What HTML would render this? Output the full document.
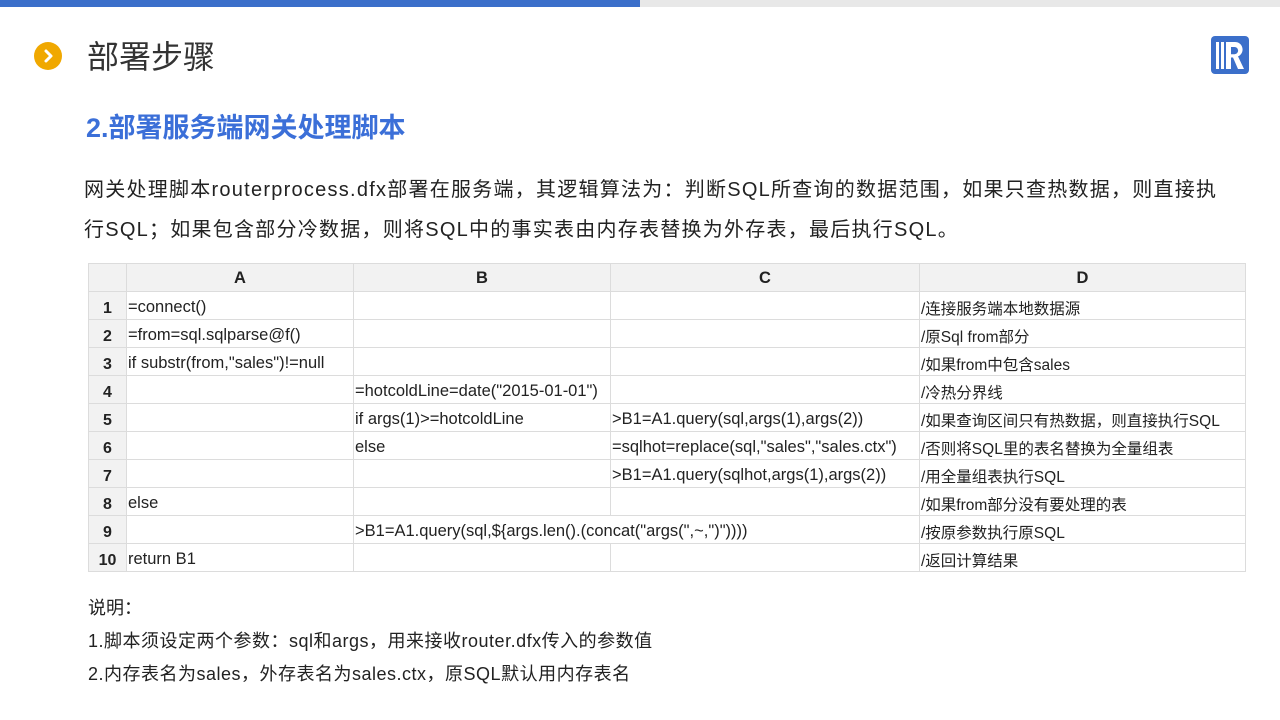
<!DOCTYPE html>
<html><head><meta charset="utf-8"><style>
*{margin:0;padding:0;box-sizing:border-box}
body{width:1280px;height:720px;background:#fff;position:relative;overflow:hidden;font-family:"Liberation Sans","Noto Sans CJK SC",sans-serif;color:#222}
.abs{position:absolute;white-space:nowrap}
table{position:absolute;left:88px;top:263px;border-collapse:collapse;table-layout:fixed;font-size:16.5px}
td{border:1px solid #dcdcdc;height:28px;padding:3px 0 0 1px;white-space:nowrap;overflow:visible;vertical-align:middle;line-height:18px}
tr.h td{background:#f2f2f2;font-weight:bold;text-align:center;padding:0}
td.n{background:#f2f2f2;font-weight:bold;text-align:center;font-size:16px;padding:6px 0 0 0}
td.d{font-size:15.5px;padding-top:8px}
</style></head><body>
<div class="abs" style="left:0;top:0;width:640px;height:7px;background:#3b6fca"></div>
<div class="abs" style="left:640px;top:0;width:640px;height:7px;background:#e8e8e8"></div>
<div class="abs" style="left:34px;top:42px;width:28px;height:28px;border-radius:50%;background:#f0a800"></div>
<svg class="abs" style="left:34px;top:42px" width="28" height="28"><path d="M12 9l5 5-5 5" stroke="#fff" stroke-width="3" fill="none" stroke-linecap="round" stroke-linejoin="round"/></svg>
<div class="abs" style="left:87px;top:36px;font-size:32px;color:#333;line-height:42px">部署步骤</div>
<svg class="abs" style="left:1210px;top:35px" width="40" height="40" viewBox="0 0 40 40"><rect x="1" y="1" width="38" height="38" rx="4" fill="#3b6fca"/><rect x="6" y="7" width="3" height="27" fill="#fff"/><rect x="11" y="7" width="3" height="27" fill="#fff"/><path d="M16 7h9a7.5 7.5 0 0 1 3 14.4L34 34h-6l-5-11.5h-2V34h-5z" fill="#fff"/><path d="M21 12h3.5a3.6 3.6 0 0 1 0 7.2H21z" fill="#3b6fca"/></svg>
<div class="abs" style="left:86px;top:110px;font-size:27px;font-weight:bold;color:#3b6fd8;line-height:36px">2.部署服务端网关处理脚本</div>
<div class="abs" style="left:84px;top:170px;font-size:20px;line-height:40px;color:#222;letter-spacing:1.25px">网关处理脚本routerprocess.dfx部署在服务端，其逻辑算法为：判断SQL所查询的数据范围，如果只查热数据，则直接执<br>行SQL；如果包含部分冷数据，则将SQL中的事实表由内存表替换为外存表，最后执行SQL。</div>
<table>
<colgroup><col style="width:38px"><col style="width:227px"><col style="width:257px"><col style="width:309px"><col style="width:326px"></colgroup>
<tr class="h"><td></td><td>A</td><td>B</td><td>C</td><td>D</td></tr>
<tr><td class="n">1</td><td>=connect()</td><td></td><td></td><td class="d">/连接服务端本地数据源</td></tr>
<tr><td class="n">2</td><td>=from=sql.sqlparse@f()</td><td></td><td></td><td class="d">/原Sql from部分</td></tr>
<tr><td class="n">3</td><td>if substr(from,"sales")!=null</td><td></td><td></td><td class="d">/如果from中包含sales</td></tr>
<tr><td class="n">4</td><td></td><td>=hotcoldLine=date("2015-01-01")</td><td></td><td class="d">/冷热分界线</td></tr>
<tr><td class="n">5</td><td></td><td>if args(1)&gt;=hotcoldLine</td><td>&gt;B1=A1.query(sql,args(1),args(2))</td><td class="d">/如果查询区间只有热数据，则直接执行SQL</td></tr>
<tr><td class="n">6</td><td></td><td>else</td><td>=sqlhot=replace(sql,"sales","sales.ctx")</td><td class="d">/否则将SQL里的表名替换为全量组表</td></tr>
<tr><td class="n">7</td><td></td><td></td><td>&gt;B1=A1.query(sqlhot,args(1),args(2))</td><td class="d">/用全量组表执行SQL</td></tr>
<tr><td class="n">8</td><td>else</td><td></td><td></td><td class="d">/如果from部分没有要处理的表</td></tr>
<tr><td class="n">9</td><td></td><td colspan="2">&gt;B1=A1.query(sql,${args.len().(concat("args(",~,")"))))</td><td class="d">/按原参数执行原SQL</td></tr>
<tr><td class="n">10</td><td>return B1</td><td></td><td></td><td class="d">/返回计算结果</td></tr>
</table>
<div class="abs" style="left:88px;top:596px;font-size:18px;line-height:24px">说明：</div>
<div class="abs" style="left:88px;top:629px;font-size:18px;line-height:24px;letter-spacing:0.5px">1.脚本须设定两个参数：sql和args，用来接收router.dfx传入的参数值</div>
<div class="abs" style="left:88px;top:662px;font-size:18px;line-height:24px;letter-spacing:0.5px">2.内存表名为sales，外存表名为sales.ctx，原SQL默认用内存表名</div>
</body></html>
